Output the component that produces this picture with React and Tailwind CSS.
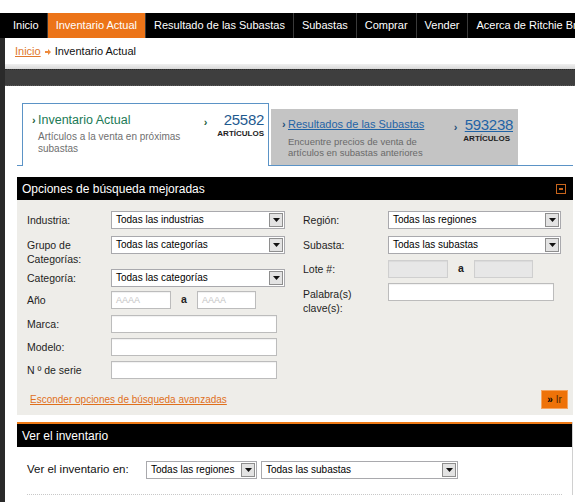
import React from "react";

const navItems = [
  "Inicio",
  "Inventario Actual",
  "Resultado de las Subastas",
  "Subastas",
  "Comprar",
  "Vender",
  "Acerca de Ritchie Bros.",
];

/* ── small form bits ───────────────────────────────────────── */
function Select({ value, className = "" }) {
  return (
    <div className={`flex h-[18px] items-stretch border border-[#a9a9ad] bg-white ${className}`}>
      <span className="flex-1 overflow-hidden whitespace-nowrap pl-[4px] text-[10px] leading-[16px] text-black">
        {value}
      </span>
      <span className="m-[1px] flex w-[14px] items-center justify-center border border-[#8e8e8e] bg-[#e3e3e3]">
        <svg width="7" height="4" viewBox="0 0 7 4">
          <path d="M0 0h7L3.5 4z" fill="#111" />
        </svg>
      </span>
    </div>
  );
}

function Input({ className = "", placeholder, disabled }) {
  return (
    <div
      className={`h-[18px] border pl-[4px] text-[9px] leading-[16px] text-[#c4c4c4] shadow-[inset_0_1px_1px_rgba(0,0,0,0.06)] ${
        disabled ? "border-[#cfcfcf] bg-[#e7e7e7]" : "border-[#bcbcbc] bg-white"
      } ${className}`}
    >
      {placeholder}
    </div>
  );
}

function Label({ children, className = "" }) {
  return <span className={`w-[84px] shrink-0 text-[10.5px] leading-[14px] text-[#1e1e1e] ${className}`}>{children}</span>;
}

export default function App() {
  return (
    <div className="h-[502px] w-[575px] overflow-hidden bg-white font-['Liberation_Sans',Arial,sans-serif]">
      <div className="h-[13px]" />

      {/* Top nav */}
      <nav className="flex h-[25px] items-stretch overflow-hidden whitespace-nowrap bg-black pl-[5px] text-[11px] text-white">
        {navItems.map((it) => (
          <span
            key={it}
            className={`flex items-center border-r border-[#3a3a3a] px-[8px] ${
              it === "Inventario Actual" ? "bg-[#ec7418]" : ""
            }`}
          >
            {it}
          </span>
        ))}
      </nav>

      <div className="flex h-[464px]">
        {/* dark left edge */}
        <div className="w-[5px] shrink-0 bg-[#2a2a2a]" />

        <div className="flex-1">
          {/* Breadcrumb */}
          <div className="flex h-[26px] items-center gap-[4px] pl-[10px] pt-[1px] text-[11px]">
            <span className="text-[#e0782c] underline">Inicio</span>
            <svg width="6" height="6" viewBox="0 0 6 6">
              <path d="M0 2h3V0l3 3-3 3V4H0z" fill="#ee8a3c" />
            </svg>
            <span className="text-[#111]">Inventario Actual</span>
          </div>

          {/* grey bars */}
          <div className="h-[5px] bg-gradient-to-b from-[#f0f0f0] to-[#d8d8d8]" />
          <div className="h-[17px] border-t border-dotted border-[#2a2a2a] border-b border-b-[#5a5a5a] bg-[#3e3e3e]" />

          {/* Tabs */}
          <div className="ml-[12px] mt-[17px] flex w-[556px] items-end border-b border-[#5b93c6] pl-[5px]">
            <div className="-mb-[1px] flex h-[63px] w-[247px] justify-between border border-b-0 border-[#5b93c6] bg-white pr-[4px] pt-[8px]">
              <div className="pl-[9px]">
                <div className="flex items-center text-[12.5px] leading-[16px] text-[#217a56]">
                  <span className="w-[6px] text-[11px] font-bold text-[#1c5f40]">›</span>
                  Inventario Actual
                </div>
                <p className="ml-[6px] mt-[3px] w-[150px] text-[10px] leading-[12px] text-[#6f6f6f]">
                  Artículos a la venta en próximas subastas
                </p>
              </div>
              <div className="flex items-start">
                <span className="mr-[10px] mt-[2px] text-[11px] font-bold text-[#1c5f40]">›</span>
                <div className="flex flex-col items-end">
                  <span className="text-[15px] leading-[16px] tracking-[-0.3px] text-[#1f5a8f]">25582</span>
                  <span className="mt-[1px] text-[8px] font-bold leading-[10px] text-[#222]">ARTÍCULOS</span>
                </div>
              </div>
            </div>

            <div className="ml-[2px] flex h-[56px] w-[247px] justify-between bg-[#c4c4c4] pl-[11px] pr-[5px] pt-[8px]">
              <div>
                <div className="flex items-center text-[11px] leading-[15px]">
                  <span className="w-[6px] text-[11px] font-bold text-[#1f4f7a]">›</span>
                  <span className="text-[#1f63a6] underline">Resultados de las Subastas</span>
                </div>
                <p className="ml-[6px] mt-[4px] w-[145px] text-[9.5px] leading-[11px] text-[#6a6a6a]">
                  Encuentre precios de venta de artículos en subastas anteriores
                </p>
              </div>
              <div className="flex items-start">
                <span className="mr-[6px] mt-[2px] text-[11px] font-bold text-[#1f4f7a]">›</span>
                <div className="flex flex-col items-end">
                  <span className="text-[15px] leading-[16px] tracking-[-0.3px] text-[#1f63a6] underline">593238</span>
                  <span className="mt-[1px] pr-[3px] text-[8px] font-bold leading-[10px] text-[#222]">ARTÍCULOS</span>
                </div>
              </div>
            </div>
          </div>

          {/* Enhanced search panel */}
          <section className="ml-[12px] mt-[11px] w-[556px]">
            <div className="flex h-[23px] items-center justify-between bg-black pl-[5px] pr-[7px] text-[12px] text-white">
              Opciones de búsqueda mejoradas
              <span className="flex h-[10px] w-[10px] items-center justify-center border border-[#c8651c]">
                <span className="h-[2px] w-[4px] bg-[#c8651c]" />
              </span>
            </div>

            <div className="bg-[#eeede9] pl-[10px] pr-[5px] pt-[11px]">
              <div className="flex">
                {/* left column */}
                <div className="w-[276px]">
                  <div className="flex items-center">
                    <Label>Industria:</Label>
                    <Select value="Todas las industrias" className="w-[174px]" />
                  </div>
                  <div className="mt-[7px] flex h-[28px] items-start">
                    <Label className="pt-[2px]">Grupo de Categorías:</Label>
                    <Select value="Todas las categorías" className="w-[174px]" />
                  </div>
                  <div className="mt-[5px] flex items-center">
                    <Label>Categoría:</Label>
                    <Select value="Todas las categorías" className="w-[174px]" />
                  </div>
                  <div className="mt-[4px] flex items-center">
                    <Label>Año</Label>
                    <Input placeholder="AAAA" className="w-[60px]" />
                    <span className="w-[26px] text-center text-[10.5px] font-bold text-[#222]">a</span>
                    <Input placeholder="AAAA" className="w-[59px]" />
                  </div>
                  <div className="mt-[6px] flex items-center">
                    <Label>Marca:</Label>
                    <Input className="w-[166px]" />
                  </div>
                  <div className="mt-[5px] flex items-center">
                    <Label>Modelo:</Label>
                    <Input className="w-[166px]" />
                  </div>
                  <div className="mt-[5px] flex items-center">
                    <Label>N º de serie</Label>
                    <Input className="w-[166px]" />
                  </div>
                </div>

                {/* right column */}
                <div className="flex-1">
                  <div className="flex items-center">
                    <Label className="w-[85px]">Región:</Label>
                    <Select value="Todas las regiones" className="w-[173px]" />
                  </div>
                  <div className="mt-[7px] flex items-center">
                    <Label className="w-[85px]">Subasta:</Label>
                    <Select value="Todas las subastas" className="w-[173px]" />
                  </div>
                  <div className="mt-[6px] flex items-center">
                    <Label className="w-[85px]">Lote #:</Label>
                    <Input disabled className="w-[60px]" />
                    <span className="w-[26px] text-center text-[10.5px] font-bold text-[#222]">a</span>
                    <Input disabled className="w-[59px]" />
                  </div>
                  <div className="mt-[5px] flex items-start">
                    <Label className="w-[85px] pt-[4px]">Palabra(s) clave(s):</Label>
                    <Input className="w-[166px]" />
                  </div>
                </div>
              </div>

              <div className="mt-[11px] flex h-[19px] items-center justify-between pl-[3px]">
                <span className="text-[10px] text-[#e0701c] underline">Esconder opciones de búsqueda avanzadas</span>
                <button className="flex h-[19px] w-[27px] items-center justify-center gap-[3px] border border-[#f5a460] bg-[#ee7208] text-[10px]">
                  <span className="font-bold text-black">»</span>
                  <span className="text-[#4a2500]">Ir</span>
                </button>
              </div>
              <div className="h-[6px]" />
            </div>
          </section>

          {/* View inventory panel */}
          <section className="ml-[12px] mt-[7px] w-[556px] border-r border-[#d0d0d0]">
            <div className="flex h-[25px] items-center border-t-2 border-[#ee7a16] bg-black pl-[5px] text-[12px] text-white">
              Ver el inventario
            </div>
            <div className="px-[10px] pt-[14px]">
              <div className="flex items-center">
                <span className="w-[119px] text-[11.5px] text-[#111]">Ver el inventario en:</span>
                <Select value="Todas las regiones" className="w-[111px]" />
                <Select value="Todas las subastas" className="ml-[4px] w-[197px]" />
              </div>
              <div className="mt-[15px] border-t border-dotted border-[#c8c8c8]" />
            </div>
          </section>
        </div>
      </div>
    </div>
  );
}
